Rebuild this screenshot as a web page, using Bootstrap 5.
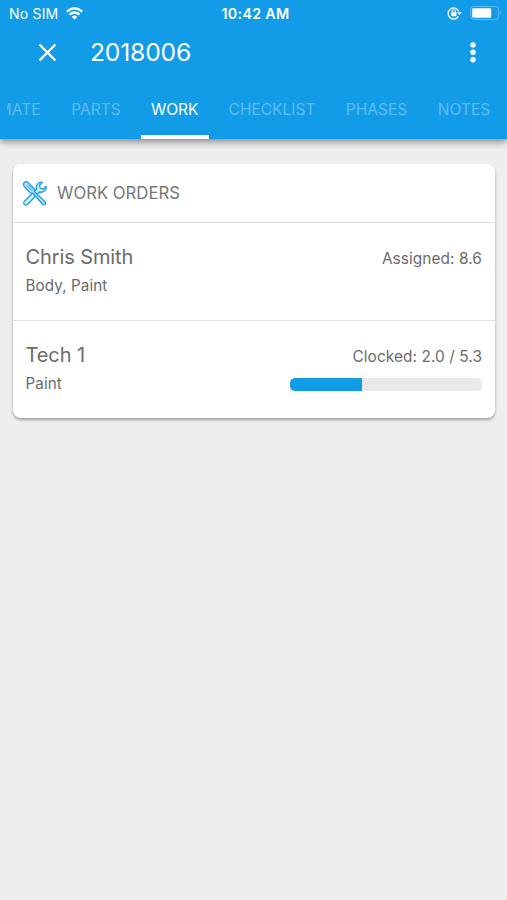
<!DOCTYPE html>
<html lang="en">
<head>
<meta charset="utf-8">
<meta name="viewport" content="width=device-width, initial-scale=1">
<title>2018006</title>
<link rel="stylesheet" href="https://cdn.jsdelivr.net/npm/bootstrap@5.3.0/dist/css/bootstrap.min.css">
<style>
body{background:#eee;font-family:Inter,"Liberation Sans",sans-serif;color:#6b6b6b;height:900px;overflow:hidden}
.app-header{background:#129be6;height:139px;box-shadow:0 3px 7px rgba(0,0,0,.42)}
.status-bar{height:27px;font-size:14px;line-height:27px;padding-left:9px;padding-right:5px}
.status-side{flex:1 1 0}
.carrier{letter-spacing:.2px;font-size:14px}
.clock{font-weight:600;font-size:14.3px;letter-spacing:.3px}
.title-bar{height:50px;padding:0 28.5px 0 38px}
.job-title{font-size:24.7px;line-height:50px;font-weight:400;letter-spacing:-.2px;margin-left:33px}
.tab-strip{height:62px;margin-left:7px;padding-top:0;gap:10px}
.tab-strip .nav-link{padding:0;height:62px;line-height:65px;font-size:15.5px;color:#5ebdf0;text-align:center;white-space:nowrap;flex:none;border-bottom:4px solid transparent;border-radius:0}
.tab-strip .nav-link.active{color:#fff;border-bottom-color:#fff}
.tab-est{width:44px;display:flex;justify-content:flex-end;padding-right:10.5px!important;overflow:hidden}
.tab-parts{width:70px}.tab-work{width:67.5px}.tab-check{width:107px}.tab-phases{width:82px}.tab-notes{width:73px}
.orders{margin:24.5px 12.5px 0 13px;border:0;border-radius:8px;box-shadow:0 2px 3px rgba(0,0,0,.32);color:inherit}
.orders-head{height:59px;padding:1px 10px 0;border-bottom:1.5px solid #dedede;font-size:16.7px;color:#777;gap:10px}
.orders-head span{padding-top:2px}
.order-row{padding:0 12.5px;height:98px;border-bottom:1.5px solid #e0e0e0}
.order-row:last-child{border:0;height:97.5px}
.tech-name{font-size:20px;line-height:28px;padding-top:20px;letter-spacing:-.1px}
.tech-tasks{font-size:15.2px;line-height:20px;padding-top:5px;letter-spacing:.1px}
.hours{font-size:15.4px;line-height:20px;padding-top:26.5px;letter-spacing:.08px}
.hours-track{width:192px;height:13px;border-radius:5px;background:#e9e9e9;margin-top:10.5px}
.hours-track .progress-bar{background:#129be6}
.battery{margin-left:8px}
</style>
</head>
<body>
<header class="app-header position-relative">
  <div class="status-bar d-flex align-items-center text-white">
    <div class="status-side d-flex align-items-center">
      <span class="carrier">No SIM</span>
      <svg width="17" height="13" viewBox="0 0 17 13" fill="none" stroke="#fff" stroke-width="2.4" class="ms-2"><path d="M.8 4.6Q8.5-2 16.2 4.6M3.5 7.6Q8.5 3.3 13.5 7.6"/><path d="M5.7 9.8Q8.5 7.4 11.3 9.8L8.5 12.7Z" fill="#fff" stroke="none"/></svg>
    </div>
    <span class="clock">10:42 AM</span>
    <div class="status-side d-flex align-items-center justify-content-end">
      <svg width="15" height="14" viewBox="0 0 15 14" fill="none" stroke="#e4f5ff"><path d="M11.4 9.3A5.5 5.5 0 1 1 11.7 4.4" stroke-width="1.4"/><path d="M9.9 5.2h4.9l-2.3 3.3z" fill="#e4f5ff" stroke="none"/><path d="M5.2 5.8V4.3a1.6 1.6 0 0 1 3.2 0v1.5" stroke-width="1.1"/><rect x="4.1" y="5.3" width="5.4" height="4" rx=".5" fill="#fff" stroke="none"/></svg>
      <svg class="battery" width="32" height="15" viewBox="0 0 32 15"><rect x=".7" y=".5" width="28" height="13" rx="3" fill="none" stroke="#62bdf0"/><rect x="2.2" y="2.3" width="19" height="9.4" rx="1.3" fill="#fff"/><path d="M30 4.7q1.8 2.3 0 4.6z" fill="#73c5f2"/></svg>
    </div>
  </div>
  <div class="title-bar d-flex align-items-center text-white">
    <svg width="19" height="19" viewBox="0 0 19 19" stroke="#fff" stroke-width="2.4"><path d="M1.4 1.5l16 16M17.4 1.5l-16 16"/></svg>
    <h1 class="job-title mb-0">2018006</h1>
    <svg class="ms-auto" width="12" height="22" viewBox="0 0 12 22" fill="#fff"><circle cx="6" cy="3.9" r="2.7"/><circle cx="6" cy="11.3" r="2.7"/><circle cx="6" cy="18.7" r="2.7"/></svg>
  </div>
  <nav class="tab-strip nav flex-nowrap overflow-hidden">
    <a class="nav-link tab-est" href="#"><span>ESTIMATE</span></a>
    <a class="nav-link tab-parts" href="#">PARTS</a>
    <a class="nav-link tab-work active" href="#">WORK</a>
    <a class="nav-link tab-check" href="#">CHECKLIST</a>
    <a class="nav-link tab-phases" href="#">PHASES</a>
    <a class="nav-link tab-notes" href="#">NOTES</a>
  </nav>
</header>
<main>
  <section class="card orders">
    <div class="orders-head d-flex align-items-center">
      <svg width="24" height="25" viewBox="0 0 24 25" fill="#d5eefb" stroke="#199fe8" stroke-width="1.3" stroke-linejoin="round"><path d="M1.2 20.5L13.6 8.3C12.5 4.5 15.2.8 19.3 1.2L16.5 4.2L17.2 7.3L20.3 8L23.2 5.2C23.6 9.3 20 12 16.2 11L4.5 23.5C1.9 25 -.1 22.6 1.2 20.5Z"/><path d="M1.3 1.6C2.7.4 4.3.7 5.5 1.9L11.2 7.8L11.5 10.6L21.8 20.5C24.1 22.7 21.5 25.2 19.4 23L10.1 12.3L7.3 11.8L1.6 5.8C.3 4.4.1 2.8 1.3 1.6Z" fill="#b5e0f8"/><path d="M3.5 4.2l5.7 5.7M5 3.4l5 5.2M3.2 21.6h.2" fill="none" stroke-width=".8"/></svg>
      <span>WORK ORDERS</span>
    </div>
    <div class="order-row d-flex justify-content-between">
      <div><div class="tech-name">Chris Smith</div><div class="tech-tasks">Body, Paint</div></div>
      <div class="hours text-end">Assigned: 8.6</div>
    </div>
    <div class="order-row d-flex justify-content-between">
      <div><div class="tech-name">Tech 1</div><div class="tech-tasks">Paint</div></div>
      <div>
        <div class="hours text-end">Clocked: 2.0 / 5.3</div>
        <div class="progress hours-track" role="progressbar" aria-label="Hours clocked" aria-valuenow="2" aria-valuemin="0" aria-valuemax="5.3"><div class="progress-bar" style="width:37.7%"></div></div>
      </div>
    </div>
  </section>
</main>
<script src="https://cdn.jsdelivr.net/npm/bootstrap@5.3.0/dist/js/bootstrap.bundle.min.js"></script>
</body>
</html>
